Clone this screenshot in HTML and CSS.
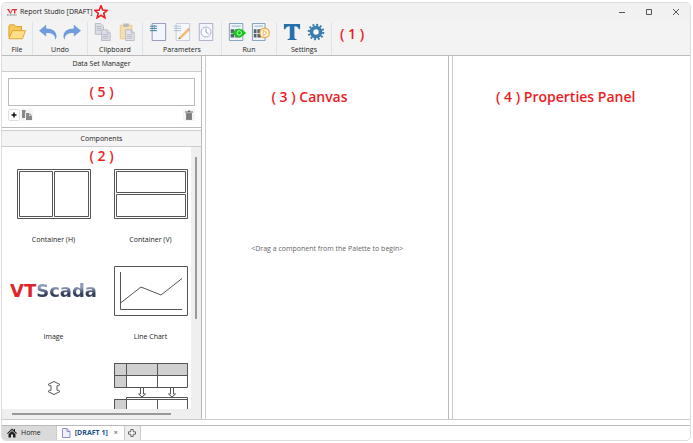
FILE: index.html
```html
<!DOCTYPE html>
<html lang="en">
<head>
    <meta charset="UTF-8">
    <meta name="viewport" content="width=device-width, initial-scale=1.0">
    <title>Report Studio [DRAFT]</title>
    <link rel="stylesheet" href="styles.css">
</head>
<body>
    <div class="window">
        <header class="titlebar">
            <svg class="brand" viewBox="0 0 10 8" aria-hidden="true">
                <path d="M0 1h2l1.5 3.4L5 1h5v1.2H8.4V5.5H7V2.2H5.4L4 5.5H3z" fill="#e0303a"/>
                <path d="M0 7h10" stroke="#777" stroke-width="1" stroke-dasharray="1 .4"/>
            </svg>
            <h1>Report Studio [DRAFT]</h1>
            <svg class="star" viewBox="0 0 14 14" aria-hidden="true">
                <path d="M7 .8l1.700 4.300 4.500.3-3.500 2.900 1.200 4.500L7 10.300l-3.900 2.500 1.200-4.500L.8 5.400l4.500-.3z" fill="#fff" stroke="#ed1c24" stroke-width="1.600"/>
            </svg>
            <div class="window-controls">
                <button aria-label="Minimize"><svg viewBox="0 0 8 8"><path d="M1 4.5h6"/></svg></button>
                <button aria-label="Maximize"><svg viewBox="0 0 8 8"><path d="M1.5 1.5h5v5h-5z"/></svg></button>
                <button aria-label="Close"><svg viewBox="0 0 8 8"><path d="M1 1l6 6M7 1L1 7"/></svg></button>
            </div>
        </header>

        <!-- Toolbar -->
        <div class="toolbar">
            <div class="group">
                <div class="tools">
                    <button aria-label="Open file">
                        <svg viewBox="0 0 20 20">
                            <path d="M1 16V3.500L2 2h5l1.500 2H15v4" fill="#f5c95a" stroke="#d99a25"/>
                            <path d="M1 17.500l4-9h14.500L16 17.500z" fill="#ffe08a" stroke="#dda02c"/>
                        </svg>
                    </button>
                </div>
                <span>File</span>
            </div>
            <div class="group">
                <div class="tools">
                    <button aria-label="Undo">
                        <svg viewBox="0 0 20 20"><path d="M0 8.500L8 2v4c7 0 11.500 3 11.500 9 0 1-.5 2-1.500 3.500.3-5.500-3.500-7.500-10-7.500v4z" fill="#6f9ddb"/></svg>
                    </button>
                    <button aria-label="Redo">
                        <svg viewBox="0 0 20 20"><path d="M20 8.500L12 2v4C5 6 .5 9 .5 15c0 1 .5 2 1.500 3.500C1.700 13 5.500 11 12 11v4z" fill="#6f9ddb"/></svg>
                    </button>
                </div>
                <span>Undo</span>
            </div>
            <div class="group">
                <div class="tools">
                    <button aria-label="Copy">
                        <svg viewBox="0 0 20 20" fill="#dddfe6" stroke="#b4b7c3">
                            <path d="M1.500.5h6l3 3v9h-9z"/><path d="M3 4h5M3 6h5M3 8h5"/>
                            <path d="M8.500 7.500h6l3.500 3.500v8.500H8.500z"/><path d="M14.500 7.500V11H18M10 13h6M10 15h6M10 17h6"/>
                        </svg>
                    </button>
                    <button aria-label="Paste">
                        <svg viewBox="0 0 20 20">
                            <path d="M2.500 2.500h13v15h-13z" fill="#f3dfb2" stroke="#e4c88c"/>
                            <path d="M6 .5h6v4H6z" fill="#bbb"/>
                            <path d="M8.500 7.500h6l3.500 3.500v8.500H8.500z" fill="#e4e6ec" stroke="#b4b7c3"/>
                            <path d="M14.500 7.500V11H18M10 13h6M10 15h6M10 17h6" fill="none" stroke="#b4b7c3"/>
                        </svg>
                    </button>
                </div>
                <span>Clipboard</span>
            </div>
            <div class="group">
                <div class="tools">
                    <button aria-label="Parameters">
                        <svg viewBox="0 0 20 20">
                            <path d="M3.500.5h15v19h-15z" fill="#f2f5fc" stroke="#8791ad"/>
                            <path d="M1 3.500h8M1 6h8M1 8.500h8" stroke="#39789f"/>
                            <path d="M6 2.500v7" stroke="#265f8c" stroke-dasharray="1 1.500"/>
                        </svg>
                    </button>
                    <button aria-label="Edit parameters">
                        <svg viewBox="0 0 20 20">
                            <path d="M3.500.5h15v19h-15z" fill="#f6f7fb" stroke="#c3c8d6"/>
                            <path d="M1 3.500h8M1 6h8M1 8.500h8" stroke="#a5c0d3"/>
                            <path d="M7 15.500L16 6.500l2 2L9 17.500l-3 .5z" fill="#f0bd75"/>
                            <path d="M16 6.500l1-1 2 2-1 1z" fill="#e58c85"/>
                            <path d="M6 18l.8-2.300L8.500 17.500z" fill="#777"/>
                        </svg>
                    </button>
                    <button aria-label="Time">
                        <svg viewBox="0 0 20 20">
                            <path d="M2.500.5h15v19h-15z" fill="#f4f5fc" stroke="#a5aac3"/>
                            <circle cx="10" cy="10" r="5.500" fill="#fff" stroke="#a2abcb"/>
                            <path d="M10 6v4l3 2" fill="none" stroke="#7f91bb"/>
                        </svg>
                    </button>
                </div>
                <span>Parameters</span>
            </div>
            <div class="group">
                <div class="tools">
                    <button aria-label="Preview report">
                        <svg viewBox="0 0 20 20">
                            <path d="M1.500.5h15v19h-15z" fill="#eef3f7" stroke="#789ab4"/>
                            <path d="M4 3.500h10" stroke="#8badc4"/>
                            <path d="M3 7h4v4H3zm0 5h4v4H3zm5-5h6v4H8zm0 5h6v4H8z" fill="#59616a"/>
                            <path d="M5 11q7-9.500 15 0-8 9.500-15 0z" fill="#16c51a"/>
                            <circle cx="12.500" cy="11" r="2.500" fill="#16c51a" stroke="#d5ffd5"/>
                        </svg>
                    </button>
                    <button aria-label="Run report">
                        <svg viewBox="0 0 20 20">
                            <path d="M.5.5h14v19H.5z" fill="#eef3f7" stroke="#789ab4"/>
                            <path d="M3 3.500h9" stroke="#8badc4"/>
                            <path d="M2 7h3v4H2zm0 5h3v4H2zm4-5h4v4H6zm0 5h4v4H6z" fill="#59616a"/>
                            <circle cx="14" cy="11" r="5.200" fill="#fff3dc" stroke="#f3ae50" stroke-width="1.500"/>
                            <path d="M12.500 8l4 3-4 3z" fill="#fff" stroke="#f3ae50"/>
                        </svg>
                    </button>
                </div>
                <span>Run</span>
            </div>
            <div class="group">
                <div class="tools">
                    <button aria-label="Fonts">
                        <svg viewBox="0 0 20 20"><path d="M1 1h18v6h-1.500Q17 3.500 12.700 3.500v13q0 1.500 2.500 1.500v1H5v-1q2.500 0 2.500-1.500v-13Q3.500 3.500 2.500 7H1z" fill="#2770ae"/></svg>
                    </button>
                    <button aria-label="Options">
                        <svg viewBox="0 0 20 20">
                            <circle cx="10" cy="10" r="8" fill="none" stroke="#3c7daf" stroke-width="2.500" stroke-dasharray="2.100 2.090"/>
                            <circle cx="10" cy="10" r="5" fill="#fff" stroke="#3c7daf" stroke-width="4"/>
                        </svg>
                    </button>
                </div>
                <span>Settings</span>
            </div>
            <strong class="note note-toolbar">( 1 )</strong>
        </div>

        <main class="workspace">
            <aside class="sidebar">
                <section class="panel">
                    <h2>Data Set Manager</h2>
                    <div class="datasets">
                        <div class="dataset-list"><strong class="note">( 5 )</strong></div>
                        <div class="dataset-actions">
                            <button class="add" aria-label="Add data set"><svg viewBox="0 0 12 12"><path d="M3.500 6h5M6 3.500v5" stroke="#111" stroke-width="1.500"/></svg></button>
                            <button aria-label="Copy data set"><svg viewBox="0 0 12 12"><path d="M1 1h3.500v2.500H4V9H1z" fill="#888"/><path d="M5 4h3v3h3v4H5zM8.500 4L11 6.500H8.500z" fill="#888"/></svg></button>
                            <button class="delete" aria-label="Delete data set"><svg viewBox="0 0 12 12"><path d="M2 2.500h3v-1h2v1h3v1H2z" fill="#666"/><path d="M3 4h6v7H3z" fill="#888"/><path d="M4.500 5v5M6 5v5M7.500 5v5" stroke="#666" stroke-width=".5"/></svg></button>
                        </div>
                    </div>
                </section>

                <section class="panel components">
                    <h2>Components</h2>
                    <div class="palette">
                        <strong class="note note-palette">( 2 )</strong>
                        <div class="items">
                            <button class="item">
                                <svg class="thumb" viewBox="0 0 74 50"><path d="M.5.5h73v49H.5zM2.500 2.500h33v45h-33zM37.500 2.500h34v45h-34z"/></svg>
                                <span>Container (H)</span>
                            </button>
                            <button class="item">
                                <svg class="thumb" viewBox="0 0 74 50"><path d="M.5.5h73v49H.5zM2.500 2.500h69v21h-69zM2.500 25.500h69v22h-69z"/></svg>
                                <span>Container (V)</span>
                            </button>
                            <button class="item">
                                <span class="wordmark"><b>VT</b><i>Scada</i></span>
                                <span>Image</span>
                            </button>
                            <button class="item">
                                <svg class="thumb" viewBox="0 0 74 50"><path d="M.5.5h73v49H.5zM6.500 6v37.500H68M6.500 37L27 21l20 8 21-16.500"/></svg>
                                <span>Line Chart</span>
                            </button>
                            <button class="item" aria-label="Spacer">
                                <svg class="thumb" viewBox="0 0 74 50"><path d="M37 18.500l6 3-1.500 1.200h-1.500v4.600h1.500l1.500 1.200-6 3-6-3 1.500-1.200H34v-4.600h-1.500L31 21.500z"/></svg>
                            </button>
                            <button class="item" aria-label="Table">
                                <svg class="thumb" viewBox="0 0 74 50">
                                    <path class="shade" d="M.5.5h73v12h-61v12H.5zM.5 36.500h12V50H.5z"/>
                                    <path d="M.5.5h73v24H.5zM.5 12.500h73M12.500.5v24M43.500.5v24M12.500 34.500h61V50M.5 36.500h73M.5 36.500V50M12.500 34.500V50M43.500 36.500V50"/>
                                    <path d="M26.500 25v6h-2l3.500 3 3.500-3h-2v-6M56.500 25v6h-2l3.500 3 3.500-3h-2v-6"/>
                                </svg>
                            </button>
                        </div>
                        <div class="scroll-y"><div></div></div>
                        <div class="scroll-x"><div></div></div>
                    </div>
                </section>
            </aside>

            <section class="pane canvas">
                <strong class="note">( 3 ) Canvas</strong>
                <p>&lt;Drag a component from the Palette to begin&gt;</p>
            </section>

            <section class="pane properties">
                <strong class="note">( 4 ) Properties Panel</strong>
            </section>
        </main>

        <!-- Page tabs -->
        <nav class="tabs">
            <a href="#home" class="tab">
                <svg viewBox="0 0 10 10"><path d="M5 .5l1.800 1.700V1H8v2.300L10 5.200l-.7.700L5 2 .7 5.900 0 5.200z" fill="#222"/><path d="M1.500 6L5 3l3.500 3v3.500h-2.500V6.500H4v3H1.500z" fill="#222"/></svg>
                Home
            </a>
            <div class="tab active">
                <svg viewBox="0 0 10 10"><path d="M1.500.5h4.500l3 3v6H1.500z" fill="#f0f1ff" stroke="#8e91c8"/><path d="M6 .5v3h3" fill="none" stroke="#8e91c8"/></svg>
                <a href="#draft">[DRAFT 1]</a>
                <button aria-label="Close tab">×</button>
            </div>
            <button class="new-tab" aria-label="New tab"><svg viewBox="0 0 10 10"><path d="M3.800 1.500h2.400v2.300h2.300v2.400H6.200v2.300H3.800V6.200H1.500V3.800h2.300z" fill="#fff" stroke="#666"/></svg></button>
        </nav>
    </div>
</body>
</html>
```

FILE: styles.css
```css
* {
    box-sizing: border-box;
}

body {
    margin: 0;
    padding: 2px 2px 2px 1px;
    height: 100vh;
    background-color: #fff;
    font-family: "Open Sans", "Noto Sans", sans-serif;
    font-size: 7px;
    line-height: 10px;
    color: #222;
}

button {
    display: flex;
    align-items: center;
    justify-content: center;
    padding: 0;
    border: none;
    background: none;
    font: inherit;
    color: inherit;
}

a {
    color: inherit;
    text-decoration: none;
}

h1, h2, p {
    margin: 0;
    font-size: 7px;
    font-weight: normal;
}

.window {
    display: flex;
    flex-direction: column;
    height: 100%;
    border: 1px solid #ddd;
    border-radius: 5px;
    overflow: hidden;
}

.note {
    font-size: 14px;
    line-height: 18px;
    font-weight: 600;
    color: #ed1c24;
    white-space: pre;
}

/* Title bar */
.titlebar {
    display: flex;
    align-items: center;
    height: 18px;
    padding: 0 1px 0 5px;
    background-color: #f1f1f1;
}

.brand {
    width: 10px;
    height: 8px;
    margin-right: 3px;
}

.star {
    width: 14px;
    height: 14px;
    margin-left: 1px;
}

.window-controls {
    display: flex;
    margin-left: auto;
}

.window-controls button {
    width: 27px;
    height: 18px;
}

.window-controls svg {
    width: 8px;
    height: 8px;
    fill: none;
    stroke: #555;
}

/* Toolbar */
.toolbar {
    display: flex;
    height: 35px;
    padding: 1px 0 0;
    background-color: #f3f3f3;
    border-bottom: 1px solid #bbb;
}

.group {
    display: flex;
    flex-direction: column;
    align-items: center;
    justify-content: space-between;
    padding: 0 3px;
    border-right: 1px solid #dde5ec;
}

.tools {
    display: flex;
}

.tools button {
    width: 24px;
    height: 20px;
}

.tools svg {
    width: 20px;
    height: 18px;
}

.note-toolbar {
    margin: 3px 8px;
}

/* Workspace */
.workspace {
    display: grid;
    grid-template-columns: 200px 245fr 238fr;
    column-gap: 3px;
    flex: 1;
    min-height: 0;
    border-bottom: 1px solid #ccc;
}

.sidebar {
    display: flex;
    flex-direction: column;
    gap: 2px;
    min-height: 0;
    border-right: 1px solid #bbb;
}

.panel h2 {
    height: 16px;
    line-height: 16px;
    text-align: center;
    background-color: #f4f4f4;
    border-bottom: 1px solid #ccc;
}

.datasets {
    padding: 6px;
    border-bottom: 1px solid #bbb;
}

.dataset-list {
    display: flex;
    align-items: center;
    justify-content: center;
    height: 28px;
    border: 1px solid #bbb;
}

.dataset-list .note {
    line-height: 26px;
}

.dataset-actions {
    display: flex;
    gap: 1px;
    margin-top: 3px;
}

.dataset-actions button {
    width: 12px;
    height: 12px;
    border-radius: 2px;
    background-color: #f4f4f4;
}

.dataset-actions .add {
    background-color: #fff;
    border: 1px solid #ddd;
}

.dataset-actions svg {
    width: 12px;
    height: 12px;
    flex-shrink: 0;
}

.dataset-actions .delete {
    margin-left: auto;
}

.components {
    display: flex;
    flex-direction: column;
    flex: 1;
    min-height: 0;
    border-top: 1px solid #ccc;
}

.components h2 {
    flex-shrink: 0;
}

.palette {
    position: relative;
    display: grid;
    grid-template-columns: 1fr 10px;
    grid-template-rows: 1fr 10px;
    flex: 1;
    min-height: 0;
    background-color: #efefef;
}

.note-palette {
    position: absolute;
    top: 0;
    left: 0;
    width: 100%;
    text-align: center;
}

.items {
    display: grid;
    grid-template-columns: 97px 97px;
    grid-auto-rows: 97px;
    padding: 22px 0 0 3px;
    min-width: 0;
    min-height: 0;
    overflow: hidden;
    background-color: #fff;
}

.item {
    flex-direction: column;
    justify-content: flex-start;
    gap: 16px;
}

.thumb {
    width: 74px;
    height: 50px;
    fill: none;
    stroke: #555;
}

.thumb .shade {
    fill: #d0d0d0;
}

.wordmark {
    height: 50px;
    line-height: 50px;
    font-family: "DejaVu Sans", sans-serif;
    font-size: 18px;
    font-weight: bold;
}

.wordmark b {
    color: #e0242c;
}

.wordmark i {
    font-style: normal;
    color: transparent;
    background: linear-gradient(#8f9cb8 35%, #343f59 65%);
    background-clip: text;
    -webkit-background-clip: text;
}

.scroll-y {
    padding: 10px 4px;
}

.scroll-y div {
    width: 2px;
    height: 67%;
    background-color: #999;
}

.scroll-x {
    padding: 4px 10px;
}

.scroll-x div {
    width: 94%;
    height: 2px;
    background-color: #999;
}

.pane {
    position: relative;
    border-left: 1px solid #ccc;
}

.pane .note {
    position: absolute;
    top: 32px;
}

.canvas {
    display: flex;
    align-items: center;
    justify-content: center;
    padding-top: 23px;
    border-right: 1px solid #bbb;
    color: #666;
}

.canvas .note {
    left: 27%;
}

.properties .note {
    left: 18%;
}

/* Tabs */
.tabs {
    display: flex;
    height: 15px;
    margin-top: 5px;
    border-top: 1px solid #bbb;
}

.tab {
    display: flex;
    align-items: center;
    gap: 4px;
    padding: 0 15px 0 5px;
    background-color: #dadada;
    border-right: 1px solid #ccc;
}

.tab svg, .new-tab svg {
    width: 10px;
    height: 10px;
}

.tab.active {
    padding: 0 4px;
    background-color: #fff;
    font-weight: bold;
    color: #1d4f8b;
}

.tab.active button {
    width: 8px;
    color: #777;
}

.new-tab {
    width: 16px;
    background-color: #eee;
    border-right: 1px solid #ccc;
}
```
